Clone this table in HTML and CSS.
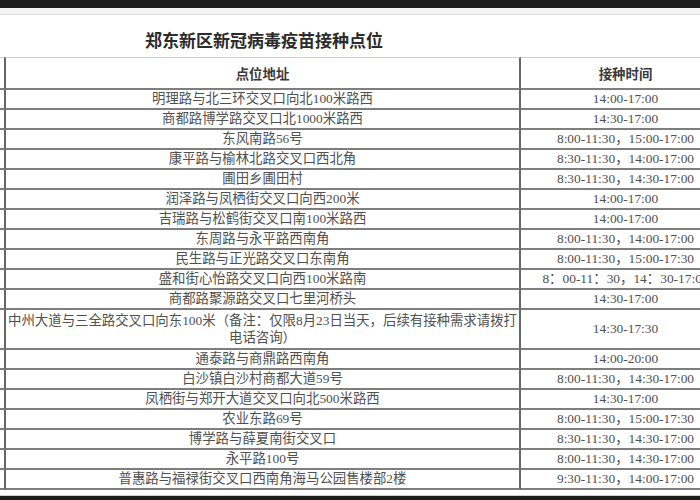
FILE: index.html
```html
<!DOCTYPE html>
<html lang="zh-CN">
<head>
<meta charset="utf-8">
<title>郑东新区新冠病毒疫苗接种点位</title>
<link rel="stylesheet" href="styles.css">
</head>
<body>
<div class="page">
  <div class="topbar"></div>
  <div class="strip"></div>
  <h1 class="title">郑东新区新冠病毒疫苗接种点位</h1>
  <div class="table-wrap">
    <table class="sites">
      <colgroup>
        <col class="c-stub">
        <col class="c-addr">
        <col class="c-time">
      </colgroup>
      <thead>
        <tr><th class="stub"></th><th>点位地址</th><th>接种时间</th></tr>
      </thead>
      <tbody>
        <tr><td class="stub"></td><td>明理路与北三环交叉口向北100米路西</td><td>14:00-17:00</td></tr>
        <tr><td class="stub"></td><td>商都路博学路交叉口北1000米路西</td><td>14:30-17:00</td></tr>
        <tr><td class="stub"></td><td>东风南路56号</td><td>8:00-11:30，15:00-17:00</td></tr>
        <tr><td class="stub"></td><td>康平路与榆林北路交叉口西北角</td><td>8:30-11:30，14:00-17:00</td></tr>
        <tr><td class="stub"></td><td>圃田乡圃田村</td><td>8:30-11:30，14:30-17:00</td></tr>
        <tr><td class="stub"></td><td>润泽路与凤栖街交叉口向西200米</td><td>14:00-17:00</td></tr>
        <tr><td class="stub"></td><td>吉瑞路与松鹤街交叉口南100米路西</td><td>14:00-17:00</td></tr>
        <tr><td class="stub"></td><td>东周路与永平路西南角</td><td>8:00-11:30，14:00-17:00</td></tr>
        <tr><td class="stub"></td><td>民生路与正光路交叉口东南角</td><td>8:00-11:30，15:00-17:30</td></tr>
        <tr><td class="stub"></td><td>盛和街心怡路交叉口向西100米路南</td><td>8：00-11：30，14：30-17:00</td></tr>
        <tr><td class="stub"></td><td>商都路聚源路交叉口七里河桥头</td><td>14:30-17:00</td></tr>
        <tr class="tall"><td class="stub"></td><td class="multi">中州大道与三全路交叉口向东100米（备注：仅限8月23日当天，后续有接种需求请拨打<br>电话咨询）</td><td>14:30-17:30</td></tr>
        <tr><td class="stub"></td><td>通泰路与商鼎路西南角</td><td>14:00-20:00</td></tr>
        <tr><td class="stub"></td><td>白沙镇白沙村商都大道59号</td><td>8:00-11:30，14:30-17:00</td></tr>
        <tr><td class="stub"></td><td>凤栖街与郑开大道交叉口向北500米路西</td><td>14:30-17:00</td></tr>
        <tr><td class="stub"></td><td>农业东路69号</td><td>8:00-11:30，15:00-17:30</td></tr>
        <tr><td class="stub"></td><td>博学路与薛夏南街交叉口</td><td>8:30-11:30，14:30-17:00</td></tr>
        <tr><td class="stub"></td><td>永平路100号</td><td>8:00-11:30，14:30-17:00</td></tr>
        <tr><td class="stub"></td><td>普惠路与福禄街交叉口西南角海马公园售楼部2楼</td><td>9:30-11:30，14:00-17:00</td></tr>
      </tbody>
    </table>
  </div>
  <div class="bottombar"></div>
</div>
</body>
</html>
```

FILE: styles.css
```css
html, body {
  margin: 0;
  padding: 0;
  background: #ffffff;
}

.page {
  width: 700px;
  height: 500px;
  display: flex;
  flex-direction: column;
  overflow: hidden;
  background: #ffffff;
}

.topbar {
  flex: none;
  height: 8px;
  background: #1c1c1c;
}

.strip {
  flex: none;
  height: 6px;
  background: #f4f4f4;
  border-bottom: 1px solid #dedede;
}

.title {
  flex: none;
  margin: 0;
  width: 528px;
  height: 42px;
  box-sizing: border-box;
  padding-top: 14px;
  line-height: 22px;
  text-align: center;
  font-family: "Noto Sans CJK SC", sans-serif;
  font-weight: 700;
  font-size: 17px;
  color: #2b2b2b;
}

.table-wrap {
  flex: 1;
  min-height: 0;
  overflow: hidden;
}

.sites {
  border-collapse: separate;
  border-spacing: 0;
  table-layout: fixed;
  width: 756px;
  margin-left: -24px;
  font-family: "Liberation Serif", "Noto Sans CJK SC", serif;
  font-size: 13.4px;
  color: #505050;
}

.c-stub { width: 30px; }
.c-addr { width: 515px; }
.c-time { width: 211px; }

.sites th,
.sites td {
  padding: 0;
  text-align: center;
  white-space: nowrap;
  border-right: 2px solid #666666;
  border-bottom: 2px solid #7e7e7e;
}

.sites thead th {
  height: 30px;
  border-top: 1px solid #d0d0d0;
  font-family: "Noto Sans CJK SC", sans-serif;
  font-weight: 700;
  font-size: 13.4px;
  color: #3a3a3a;
}

.sites tbody td {
  height: 18px;
  line-height: 18px;
}

.sites tbody tr.tall td {
  height: 38px;
}

.sites td.multi {
  white-space: normal;
  line-height: 17px;
}

.bottombar {
  flex: none;
  height: 4px;
  background: #1c1c1c;
  border-top: 1px solid #cfcfcf;
}
```
